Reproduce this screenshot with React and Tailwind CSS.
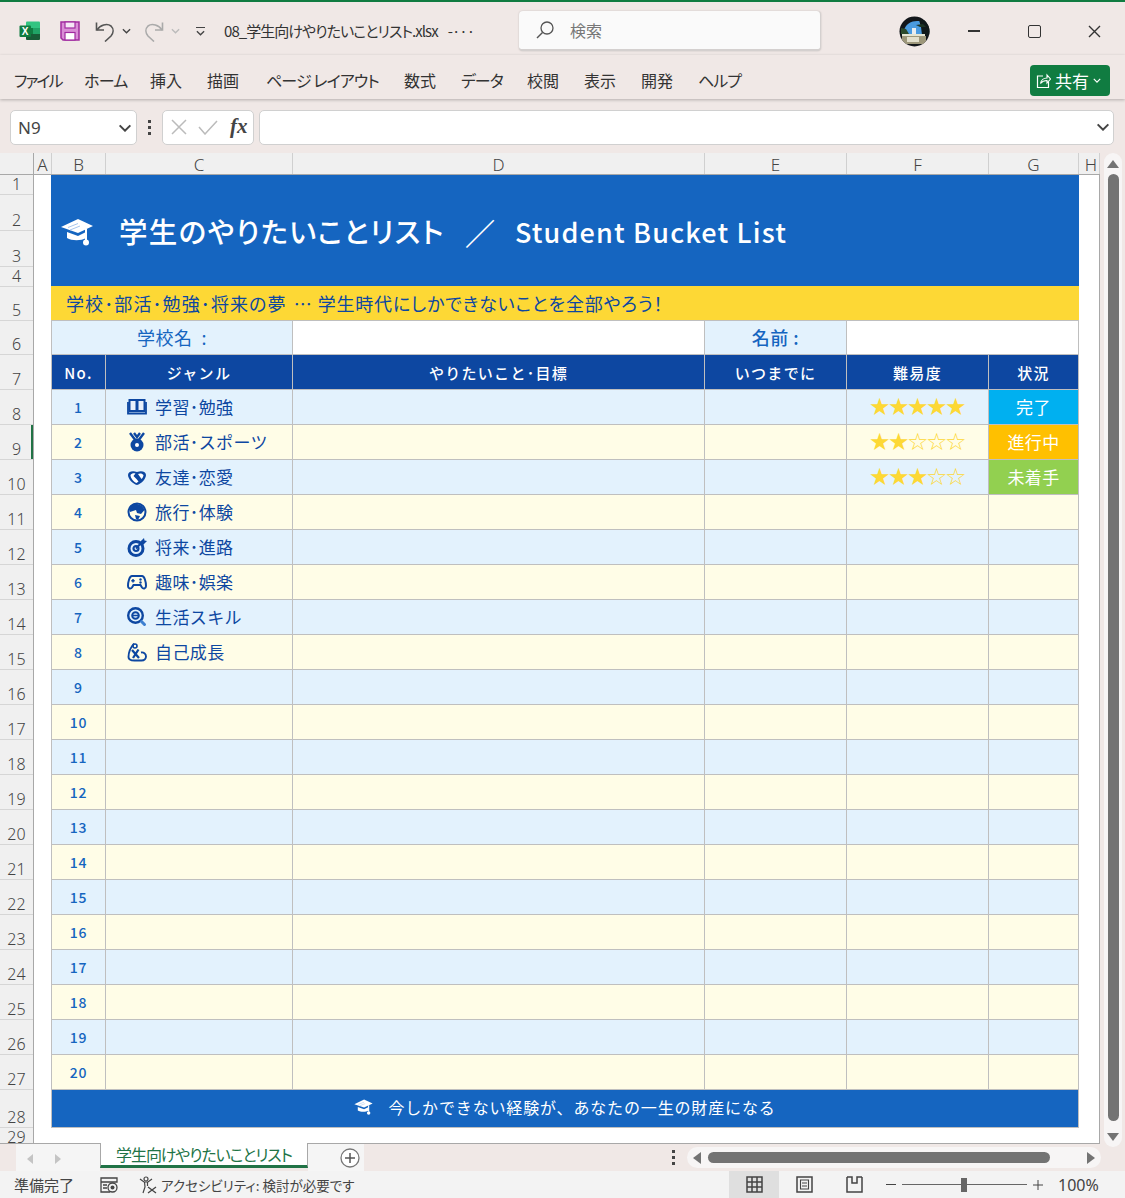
import React from 'react';

const Svg = ({ w, h, vb, children, className = '' }) => (
  <svg width={w} height={h} viewBox={vb} fill="none" className={`shrink-0 ${className}`}>
    {children}
  </svg>
);

const Chevron = ({ color = '#444', w = 9, h = 6, sw = 1.5 }) => (
  <Svg w={w} h={h} vb="0 0 10 6">
    <path d="M1 1l4 4 4-4" stroke={color} strokeWidth={sw} />
  </Svg>
);

const ExcelLogo = () => (
  <Svg w={22} h={20} vb="0 0 22 20">
    <path d="M7 1.500a1 1 0 011-1h12a1 1 0 011 1V7H7z" fill="#33c481" />
    <rect x="14" y="7" width="7" height="6" fill="#21a366" />
    <rect x="7" y="7" width="7" height="6" fill="#107c41" />
    <path d="M7 13h14v5a1 1 0 01-1 1H8a1 1 0 01-1-1z" fill="#185c37" />
    <rect x="0.500" y="4.500" width="11.500" height="11.500" rx="1" fill="#107c41" />
    <text x="6.200" y="14" fontSize="10" fontWeight="700" fill="#fff" textAnchor="middle" fontFamily="Liberation Sans">X</text>
  </Svg>
);

const SaveIcon = () => (
  <Svg w={20} h={20} vb="0 0 20 20">
    <path d="M1 1h18v18H3l-2-2z" fill="#d98ed6" stroke="#a12ba0" strokeWidth="1.500" />
    <rect x="5" y="1" width="10" height="6" fill="#f5e6f5" stroke="#a12ba0" strokeWidth="1.200" />
    <rect x="5" y="11.500" width="10" height="7.500" fill="#fff" stroke="#a12ba0" strokeWidth="1.200" />
  </Svg>
);

const UndoIcon = ({ color, flip }) => (
  <Svg w={20} h={21} vb="0 0 20 21" className={flip ? '-scale-x-100' : ''}>
    <path d="M1.500 1.500v7.500H9" stroke={color} strokeWidth="1.600" />
    <path d="M2 9C5 4 12 2 16 5c3 3 2.500 7 0 10l-6 5.500" stroke={color} strokeWidth="1.600" />
  </Svg>
);

const CapIcon = ({ w, h }) => (
  <Svg w={w} h={h} vb="0 0 32 28">
    <path d="M17 1L32 8 17 15 0 9z" fill="#fff" />
    <path d="M7 9.500l10-4M9 12l10-4" stroke="#a9c6ec" strokeWidth="1" />
    <path d="M6 14l11 4 8-4v6c-5 3-14 3-19 0z" fill="#fff" />
    <path d="M25 11v11" stroke="#fff" strokeWidth="2" />
    <circle cx="25" cy="24.500" r="3" fill="#fff" />
  </Svg>
);

const blue = '#0d47a1';

// genre icons, all on a 20x20 box
const genreIcons = {
  book: (
    <>
      <path d="M2.500 3h7v11h-7zM10.500 3h7v11h-7z" fill="#e8f0fb" stroke={blue} strokeWidth="2" />
      <path d="M1 5v11.500h18V5" stroke={blue} strokeWidth="1.800" />
    </>
  ),
  medal: (
    <>
      <path d="M3 1l6 8M17 1l-6 8M7 1l3 4 3-4" stroke={blue} strokeWidth="2.400" />
      <circle cx="10" cy="13" r="6.500" fill={blue} />
      <circle cx="10" cy="13" r="2" fill="#fff" />
    </>
  ),
  hands: (
    <>
      <path d="M1 8c0-3 4-5 9-3 5-2 9 0 9 3 0 4-5 9-9 10-4-1-9-6-9-10z" fill={blue} />
      <path d="M3.500 8c1-1.500 3-2 5-1.500l-2 2.500 3 3 2 2.500-2 1.500c-3-1-6-5-6-8zM11 7c2-1 4.500-.5 5.500 1 0 1.500-1 3-2 4z" fill="#fff" />
    </>
  ),
  globe: (
    <>
      <circle cx="10" cy="10" r="8.500" stroke={blue} strokeWidth="2" />
      <path d="M6 2.500C10 1 16 3 17.500 8L14 12l-4-1-1-3-6 2C2 7 3.500 4 6 2.500zM8 13l5 1-2 4-2-1z" fill={blue} />
    </>
  ),
  target: (
    <>
      <circle cx="9" cy="11.500" r="7" stroke={blue} strokeWidth="3" />
      <circle cx="9" cy="11.500" r="2.500" stroke={blue} strokeWidth="2.200" />
      <path d="M9 11.500L16 4" stroke={blue} strokeWidth="2" />
      <path d="M13 5L17 1l.5 2.500 2.500.5-4 4z" fill={blue} />
    </>
  ),
  game: (
    <>
      <path d="M5 4h10c2.500 0 4 6 4 10 0 3-3 3-4 1.500l-1.500-2.500h-7L5 15.500C4 17 1 17 1 14c0-4 1.500-10 4-10z" stroke={blue} strokeWidth="2" />
      <path d="M6 7v3.500M4.300 8.700h3.400" stroke={blue} strokeWidth="1.500" />
      <circle cx="13.500" cy="7.500" r="1.200" fill={blue} />
      <circle cx="13.500" cy="10.500" r="1.200" fill={blue} />
    </>
  ),
  search: (
    <>
      <circle cx="8.500" cy="8.500" r="7.300" stroke={blue} strokeWidth="2.400" />
      <circle cx="8.500" cy="8.500" r="3.300" stroke={blue} strokeWidth="2" />
      <path d="M6 8.500h5" stroke={blue} strokeWidth="1.500" />
      <path d="M14.500 14.500l3 3" stroke="#3d7fd0" strokeWidth="3" strokeLinecap="round" />
    </>
  ),
  person: (
    <>
      <path d="M7 1.500C4 5 1.500 11 1.500 15c0 3 2.500 3.500 6 3.500h7c3 0 4.500-2 4.500-4 0-3-2.500-4.500-5-4" stroke={blue} strokeWidth="1.900" />
      <circle cx="8" cy="4" r="2" stroke={blue} strokeWidth="1.600" />
      <path d="M5 8l7 8M11.500 7.500L6 16" stroke={blue} strokeWidth="2.300" />
    </>
  ),
};

const GenreIcon = ({ name }) => (
  <Svg w={20} h={20} vb="0 0 20 20">{genreIcons[name]}</Svg>
);

const menus = [
  ['ファイル', 'w-[70px] tracking-[-2px]'],
  ['ホーム', 'w-[66px] tracking-[-0.7px]'],
  ['挿入', 'w-[57px]'],
  ['描画', 'w-[59px]'],
  ['ページ レイアウト', 'w-[138px] tracking-[-0.9px]'],
  ['数式', 'w-[57px]'],
  ['データ', 'w-[66px] tracking-[-1px]'],
  ['校閲', 'w-[57px]'],
  ['表示', 'w-[57px]'],
  ['開発', 'w-[57px]'],
  ['ヘルプ', 'w-[43px] tracking-[-1px]'],
];

const columns = [
  ['', 'w-[34px]'],
  ['A', 'w-[18px]'],
  ['B', 'w-[54px]'],
  ['C', 'w-[187px]'],
  ['D', 'w-[412px]'],
  ['E', 'w-[142px]'],
  ['F', 'w-[142px]'],
  ['G', 'w-[90px]'],
  ['H', 'w-[21px] pl-[4px]'],
];

const rowHeights = [20, 36, 36, 20, 34, 34, 35, ...Array(20).fill(35), 38];

const genres = [
  ['book', '学習･勉強'],
  ['medal', '部活･スポーツ'],
  ['hands', '友達･恋愛'],
  ['globe', '旅行･体験'],
  ['target', '将来･進路'],
  ['game', '趣味･娯楽'],
  ['search', '生活スキル'],
  ['person', '自己成長'],
];

const rowData = {
  0: { stars: '★★★★★', status: '完了', statusBg: 'bg-[#00b0f0]' },
  1: { stars: '★★☆☆☆', status: '進行中', statusBg: 'bg-[#ffc000]' },
  2: { stars: '★★★☆☆', status: '未着手', statusBg: 'bg-[#92d050]' },
};

const headers = ['No.', 'ジャンル', 'やりたいこと･目標', 'いつまでに', '難易度', '状況'];

const cols = 'grid grid-cols-[55px_187px_412px_142px_142px_90px]';
const cell = 'border-r border-b border-[#bfbfbf] flex items-center justify-center';

function Row({ i }) {
  const bg = i % 2 === 0 ? 'bg-[#e3f2fd]' : 'bg-[#fffde7]';
  const genre = genres[i];
  const data = rowData[i];
  return (
    <div className={`${cols} h-[35px] ${bg}`}>
      <div className={`${cell} border-l text-[14px] font-medium tracking-[0.8px] text-[#1565c0]`}>{i + 1}</div>
      <div className={`${cell} !justify-start pl-[21px] gap-[8px] text-[17px] tracking-[0.4px] text-[#0d47a1]`}>
        {genre && <GenreIcon name={genre[0]} />}
        {genre && <span>{genre[1]}</span>}
      </div>
      <div className={cell} />
      <div className={cell} />
      <div className={`${cell} font-['DejaVu_Sans',sans-serif] text-[24px] tracking-[-2.500px] pr-[2px] leading-none text-[#fdd835]`}>{data && data.stars}</div>
      <div className={`${cell} text-[17px] tracking-[0.4px] text-white ${data ? data.statusBg : ''}`}>{data && data.status}</div>
    </div>
  );
}

export default function App() {
  return (
    <div className="w-[1125px] h-[1198px] flex flex-col overflow-hidden bg-[#f0e8e6] text-[#333] font-['Noto_Sans_CJK_JP','Noto_Sans',sans-serif]">
      {/* title bar */}
      <div className="h-[55px] shrink-0 border-t-2 border-[#107c41] flex items-center pl-[19px] pt-[5px]">
        <ExcelLogo />
        <div className="ml-[19px]"><SaveIcon /></div>
        <div className="ml-[15px]"><UndoIcon color="#555" /></div>
        <div className="ml-[7px]"><Chevron /></div>
        <div className="ml-[13px]"><UndoIcon color="#aaa" flip /></div>
        <div className="ml-[7px]"><Chevron color="#bbb" /></div>
        <div className="ml-[16px] flex flex-col items-center gap-[2px]">
          <div className="w-[9px] h-px bg-[#444]" />
          <Chevron />
        </div>
        <div className="ml-[19px] w-[295px] text-[15px] whitespace-nowrap flex items-center">
          <span className="tracking-[-0.950px] [font-feature-settings:'palt']">08_学生向けやりたいことリスト.xlsx</span>
          <span className="ml-[10px] tracking-[-1px]">-···</span>
        </div>
        <div className="w-[302px] h-[40px] bg-[#fafafa] rounded-[4px] border-b-2 border-r border-[#d4d0cf] shadow-[0_0_2px_rgba(0,0,0,0.2)] flex items-center pl-[16px] gap-[15px]">
          <Svg w={20} h={20} vb="0 0 20 20">
            <circle cx="12" cy="8" r="6" stroke="#555" strokeWidth="1.300" />
            <path d="M7.500 12.500L2 18" stroke="#555" strokeWidth="1.500" />
          </Svg>
          <span className="text-[16px] text-[#777]">検索</span>
        </div>
        <div className="ml-[78px]">
          <Svg w={31} h={31} vb="0 0 31 31">
            <defs>
              <clipPath id="avatar"><circle cx="15.500" cy="15.500" r="15" /></clipPath>
            </defs>
            <g clipPath="url(#avatar)">
              <rect width="31" height="31" fill="#12161a" />
              <path d="M5 14C7 8 12 5 18 5h6v13H5z" fill="#4a9be0" />
              <path d="M2 12l5 1 3 5H2z" fill="#2c4a2c" />
              <path d="M20 4l2 7 1 8h8V4z" fill="#10191a" />
              <path d="M17 9l7-1 3 3-6 0z" fill="#1d3524" />
              <rect x="13" y="12" width="4" height="6" fill="#e8ecef" />
              <rect x="3" y="18" width="23" height="2" fill="#e4e4d2" />
              <rect x="3" y="20" width="24" height="8" fill="#9d977a" />
              <rect x="8" y="21" width="12" height="5" fill="#e2dfcc" />
            </g>
          </Svg>
        </div>
        <div className="ml-[38px] w-[12px] h-[1.500px] bg-[#333]" />
        <div className="ml-[48px] w-[13px] h-[13px] border-[1.500px] border-[#333] rounded-[2px]" />
        <div className="ml-[47px]">
          <Svg w={13} h={13} vb="0 0 13 13">
            <path d="M1 1l11 11M12 1L1 12" stroke="#333" strokeWidth="1.400" />
          </Svg>
        </div>
      </div>

      {/* menu */}
      <div className="h-[44px] shrink-0 flex items-start relative z-10 shadow-[0_1px_3px_rgba(0,0,0,0.25)] pl-[14px] pr-[15px]">
        <div className="flex mt-[11px] h-[28px] items-center text-[16px] [font-feature-settings:'palt'] flex-1 whitespace-nowrap">
          {menus.map(([m, w]) => (
            <span key={m} className={w}>{m}</span>
          ))}
        </div>
        <div className="mt-[10px] w-[80px] h-[31px] rounded-[4px] bg-[#107c41] text-white text-[17px] flex items-center pl-[6px] gap-[4px]">
          <Svg w={15} h={16} vb="0 0 15 16">
            <path d="M7 3H1.500v11.500h11V9" stroke="#fff" strokeWidth="1.200" />
            <path d="M4.500 10.500C5 7 8 5 11 5V2l3.500 4L11 10V7.500c-2.500 0-5 1-6.500 3z" stroke="#fff" strokeWidth="1.100" />
          </Svg>
          <span>共有</span>
          <Chevron color="#fff" w={8} h={5} />
        </div>
      </div>

      {/* formula bar */}
      <div className="h-[54px] shrink-0 flex items-center pl-[10px] pr-[11px] pt-[2px]">
        <div className="w-[127px] h-[35px] bg-white rounded-[5px] border border-[#d0d0d0] flex items-center justify-between pl-[7px] pr-[4px] pt-[1px] font-['Noto_Sans',sans-serif] text-[17px] text-[#444]">
          N9
          <Chevron w={14} h={8} color="#444" />
        </div>
        <div className="w-[25px] flex flex-col items-center gap-[3px]">
          <div className="w-[3px] h-[3px] bg-[#444]" />
          <div className="w-[3px] h-[3px] bg-[#444]" />
          <div className="w-[3px] h-[3px] bg-[#444]" />
        </div>
        <div className="w-[92px] h-[35px] bg-white rounded-[5px] border border-[#d0d0d0] flex items-center pl-[8px] gap-[11px]">
          <Svg w={16} h={16} vb="0 0 16 16">
            <path d="M1 1l14 14M15 1L1 15" stroke="#bbb" strokeWidth="1.500" />
          </Svg>
          <Svg w={20} h={15} vb="0 0 20 15">
            <path d="M1 7l6 7L19 1" stroke="#bbb" strokeWidth="1.500" />
          </Svg>
          <span className="font-['Liberation_Serif',serif] italic font-bold text-[21px] text-[#444] ml-[1px]">fx</span>
        </div>
        <div className="ml-[5px] flex-1 h-[35px] bg-white rounded-[5px] border border-[#d0d0d0] flex items-center justify-end pr-[3px]">
          <Chevron w={14} h={8} color="#444" />
        </div>
      </div>

      {/* sheet area + vertical scroll */}
      <div className="flex h-[991px] shrink-0">
        <div className="w-[1100px] flex flex-col border-b border-[#a8a8a8]">
          <div className="h-[22px] shrink-0 flex bg-[#f0f0f0] border-b border-[#a8a8a8] font-['Noto_Sans',sans-serif] font-light text-[17px] leading-[23px] text-[#444]">
            {columns.map(([c, w]) => (
              <div key={c || 'corner'} className={`${w} text-center border-r ${c === '' ? 'border-[#a8a8a8]' : 'border-[#d0d0d0]'}`}>
                {c}
              </div>
            ))}
          </div>
          <div className="flex flex-1 bg-white border-r border-[#a8a8a8] overflow-hidden">
            {/* row numbers */}
            <div className="w-[34px] shrink-0 bg-[#f0f0f0] border-r border-[#a8a8a8] font-['Noto_Sans',sans-serif] font-light text-[16px] leading-[18px] text-[#444]">
              {rowHeights.map((h, i) => (
                <div
                  key={i}
                  style={{ height: h }}
                  className={`flex items-end justify-center border-b border-[#d6d6d6] pb-[1px] ${i === 8 ? 'shadow-[inset_-2px_0_0_#217346]' : ''}`}
                >
                  {i + 1}
                </div>
              ))}
              <div className="flex justify-center">29</div>
            </div>
            {/* table */}
            <div className="ml-[17px] w-[1028px]">
              <div className="h-[111px] bg-[#1565c0] flex items-center pl-[10px] text-white pt-[2px]">
                <CapIcon w={32} h={28} />
                <span className="ml-[26px] text-[28.500px] font-medium leading-none [font-feature-settings:'palt'] tracking-[1.350px]">学生のやりたいことリスト</span>
                <span className="ml-[20px] text-[30px] font-bold leading-none">／</span>
                <span className="ml-[20px] text-[27px] font-medium leading-none tracking-[1.150px]">Student Bucket List</span>
              </div>
              <div className="h-[35px] bg-[#fdd835] border-b border-[#bfbfbf] flex items-center pl-[15px] text-[18px] text-[#0d47a1] [font-feature-settings:'palt'] whitespace-nowrap">
                <span className="tracking-[1.100px]">学校･部活･勉強･将来の夢</span>
                <span className="ml-[7px]">⋯</span>
                <span className="ml-[6px] tracking-[0.800px]">学生時代にしかできないことを全部やろう！</span>
              </div>
              <div className="grid grid-cols-[242px_412px_142px_232px] h-[34px] text-[18px] text-[#1565c0]">
                <div className={`${cell} border-l bg-[#e3f2fd] tracking-[0.5px]`}>学校名&nbsp;&nbsp;:</div>
                <div className={`${cell} bg-white`} />
                <div className={`${cell} bg-[#e3f2fd] font-medium tracking-[0.5px]`}>名前&nbsp;:</div>
                <div className={`${cell} bg-white`} />
              </div>
              <div className={`${cols} h-[35px] bg-[#0d47a1] text-[15px] font-medium tracking-[1.300px] text-white`}>
                {headers.map((t, i) => (
                  <div key={t} className={`${cell} ${i === 0 ? 'border-l' : ''} pt-[2px]`}>{t}</div>
                ))}
              </div>
              {Array.from({ length: 20 }, (_, i) => (
                <Row key={i} i={i} />
              ))}
              <div className="h-[38px] bg-[#1565c0] border-x border-b border-[#bfbfbf] flex items-center justify-center gap-[15px] text-[16px] tracking-[0.850px] text-white pb-[3px]">
                <CapIcon w={19} h={16} />
                <span>今しかできない経験が、あなたの一生の財産になる</span>
              </div>
            </div>
          </div>
        </div>
        <div className="ml-[4px] w-[18px] h-[994px] rounded-full bg-[#f7f5f5] flex flex-col items-center pt-[7px]">
          <div className="w-0 h-0 border-x-[6px] border-x-transparent border-b-[8px] border-b-[#737373]" />
          <div className="mt-[6px] w-[11px] h-[947px] rounded-full bg-[#737373]" />
          <div className="mt-[12px] w-0 h-0 border-x-[6px] border-x-transparent border-t-[8px] border-t-[#737373]" />
        </div>
      </div>

      {/* tabs + horizontal scroll */}
      <div className="h-[27px] shrink-0 flex items-stretch">
        <div className="ml-[16px] w-[84px] bg-[#f5f5f5] flex items-center pl-[11px] gap-[22px] pt-[2px]">
          <div className="w-0 h-0 border-y-[5px] border-y-transparent border-r-[6px] border-r-[#c4c4c4]" />
          <div className="w-0 h-0 border-y-[5px] border-y-transparent border-l-[6px] border-l-[#c4c4c4]" />
        </div>
        <div className="w-[208px] bg-white border-x border-[#a8a8a8] border-b-[3px] border-b-[#217346] -mt-px mb-[3px] flex items-center justify-center text-[16px] tracking-[-1.100px] text-[#217346] [font-feature-settings:'palt'] whitespace-nowrap">
          学生向けやりたいことリスト
        </div>
        <div className="w-[56px] bg-[#f5f5f5] flex items-center justify-end pr-[4px]">
          <Svg w={20} h={20} vb="0 0 20 20">
            <circle cx="10" cy="10" r="9" fill="#fff" stroke="#777" strokeWidth="1.300" />
            <path d="M10 5v10M5 10h10" stroke="#555" strokeWidth="1.500" />
          </Svg>
        </div>
        <div className="ml-[301px] w-[16px] flex flex-col items-center justify-center gap-[3px]">
          <div className="w-[3px] h-[3px] bg-[#444]" />
          <div className="w-[3px] h-[3px] bg-[#444]" />
          <div className="w-[3px] h-[3px] bg-[#444]" />
        </div>
        <div className="ml-[6px] mt-[3px] mb-[3px] w-[414px] rounded-full bg-[#f7f5f5] flex items-center pl-[6px]">
          <div className="w-0 h-0 border-y-[6px] border-y-transparent border-r-[8px] border-r-[#737373]" />
          <div className="ml-[7px] w-[342px] h-[11px] rounded-full bg-[#737373]" />
          <div className="ml-[37px] w-0 h-0 border-y-[6px] border-y-transparent border-l-[8px] border-l-[#737373]" />
        </div>
      </div>

      {/* status bar */}
      <div className="flex-1 bg-[#f3f3f3] flex items-center pl-[14px] text-[15px] text-[#444]">
        <span className="w-[86px] pt-[1px]">準備完了</span>
        <Svg w={18} h={16} vb="0 0 18 16">
          <path d="M1 1h16v4H1zM1 5v10h9M3 8h4M3 11h4" stroke="#444" strokeWidth="1.300" />
          <circle cx="12.500" cy="10.500" r="4.500" stroke="#444" strokeWidth="1.300" />
          <circle cx="12.500" cy="10.500" r="2" fill="#444" />
        </Svg>
        <div className="ml-[21px]">
          <Svg w={18} h={18} vb="0 0 18 18">
            <circle cx="7" cy="3" r="2" stroke="#444" strokeWidth="1.200" />
            <path d="M1 3l4 3h4l4-3M5.500 6l.5 5-2 6M8.500 6l0 4" stroke="#444" strokeWidth="1.200" />
            <path d="M9 11l8 6M17 11l-8 6" stroke="#444" strokeWidth="1.300" />
          </Svg>
        </div>
        <span className="ml-[4px] w-[568px] pt-[1px] text-[13.500px] [font-feature-settings:'palt'] whitespace-nowrap">アクセシビリティ: 検討が必要です</span>
        <div className="w-[50px] h-full bg-[#dfdfdf] flex items-center justify-center">
          <Svg w={17} h={17} vb="0 0 17 17">
            <path d="M1 1h15v15H1zM1 6h15M1 11h15M6 1v15M11 1v15" stroke="#444" strokeWidth="1.500" />
          </Svg>
        </div>
        <div className="w-[50px] flex justify-center">
          <Svg w={17} h={17} vb="0 0 17 17">
            <path d="M1 1h15v15H1z" stroke="#444" strokeWidth="1.500" />
            <path d="M4.500 4h8v9h-8zM6 7h5M6 10h5" stroke="#444" strokeWidth="1.100" />
          </Svg>
        </div>
        <div className="w-[50px] flex justify-center">
          <Svg w={17} h={17} vb="0 0 17 17">
            <path d="M1 1v15h15V1M1 1h5v6h5V1h5" stroke="#444" strokeWidth="1.500" />
          </Svg>
        </div>
        <div className="ml-[7px] w-[10px] h-px bg-[#444]" />
        <div className="ml-[6px] w-[125px] h-px bg-[#666] flex items-center pl-[59px]">
          <div className="w-[6px] h-[14px] bg-[#666] shrink-0" />
        </div>
        <Svg w={10} h={10} vb="0 0 10 10" className="ml-[6px]">
          <path d="M5 0v10M0 5h10" stroke="#444" strokeWidth="1" />
        </Svg>
        <span className="ml-[15px] font-['Noto_Sans',sans-serif] text-[16px]">100%</span>
      </div>
    </div>
  );
}
